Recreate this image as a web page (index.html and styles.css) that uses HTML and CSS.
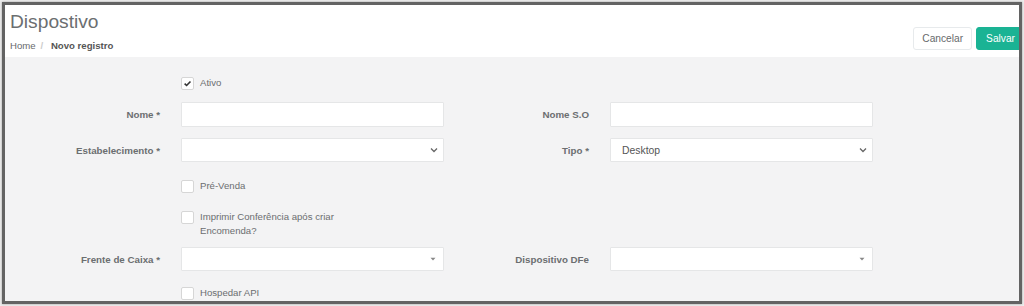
FILE: index.html
```html
<!DOCTYPE html>
<html lang="pt-BR">
<head>
  <meta charset="UTF-8">
  <title>Dispostivo</title>
  <link rel="stylesheet" href="styles.css">
</head>
<body>

<div class="frame">

  <!-- cabeçalho -->
  <header class="page-heading">
    <div class="heading-text">
      <h2>Dispostivo</h2>
      <ol class="breadcrumb">
        <li>Home</li>
        <li class="active">Novo registro</li>
      </ol>
    </div>
    <div class="actions">
      <button class="btn btn-white">Cancelar</button>
      <button class="btn btn-primary">Salvar</button>
    </div>
  </header>

  <!-- formulário -->
  <form class="form">
    <div class="row r-ativo">
      <div class="field">
        <label class="check">
          <span class="box"><svg width="9" height="9" viewBox="0 0 10 10"><path d="M1.8 5.2 L4 7.2 L8.3 2.8" fill="none" stroke="#333" stroke-width="1.8"/></svg></span>
          <span>Ativo</span>
        </label>
      </div>
    </div>

    <div class="row r-nome">
      <div class="field">
        <label class="lbl">Nome *</label>
        <input class="control" type="text">
      </div>
      <div class="field">
        <label class="lbl">Nome S.O</label>
        <input class="control" type="text">
      </div>
    </div>

    <div class="row r-estab">
      <div class="field">
        <label class="lbl">Estabelecimento *</label>
        <div class="control select">
          <span></span>
          <svg width="8" height="6" viewBox="0 0 8 6"><path d="M1 1.5 L4 4.5 L7 1.5" fill="none" stroke="#666" stroke-width="1.3"/></svg>
        </div>
      </div>
      <div class="field">
        <label class="lbl">Tipo *</label>
        <div class="control select">
          <span>Desktop</span>
          <svg width="8" height="6" viewBox="0 0 8 6"><path d="M1 1.5 L4 4.5 L7 1.5" fill="none" stroke="#666" stroke-width="1.3"/></svg>
        </div>
      </div>
    </div>

    <div class="row r-prevenda">
      <div class="field">
        <label class="check"><span class="box"></span><span>Pré-Venda</span></label>
      </div>
    </div>

    <div class="row r-imprimir">
      <div class="field">
        <label class="check"><span class="box"></span><span class="wrap">Imprimir Conferência após criar Encomenda?</span></label>
      </div>
    </div>

    <div class="row r-frente">
      <div class="field">
        <label class="lbl">Frente de Caixa *</label>
        <div class="control select s2">
          <span></span>
          <svg width="6" height="4" viewBox="0 0 6 4"><path d="M0.5 0.8 L5.5 0.8 L3 3.5 Z" fill="#888"/></svg>
        </div>
      </div>
      <div class="field">
        <label class="lbl">Dispositivo DFe</label>
        <div class="control select s2">
          <span></span>
          <svg width="6" height="4" viewBox="0 0 6 4"><path d="M0.5 0.8 L5.5 0.8 L3 3.5 Z" fill="#888"/></svg>
        </div>
      </div>
    </div>

    <div class="row r-hospedar">
      <div class="field">
        <label class="check"><span class="box"></span><span>Hospedar API</span></label>
      </div>
    </div>
  </form>

</div>

</body>
</html>
```

FILE: styles.css
```css
body { margin: 0; background: #ececec; font-family: "Liberation Sans", Arial, sans-serif; color: #676a6c; }

/* moldura do print */
.frame {
  margin: 2px;
  width: 1014px;
  height: 296px;
  border: 3px solid #636363;
  box-shadow: 0 0 2px rgba(0, 0, 0, 0.35);
  background: #f3f3f4;
  overflow: hidden;
}

/* cabeçalho */
.page-heading {
  display: flex;
  justify-content: space-between;
  height: 52px;
  box-sizing: border-box;
  padding: 6px 0 0 5px;
  background: #fff;
}
.page-heading h2 { margin: 0; font-size: 19.2px; line-height: 22px; font-weight: 400; color: #6b6e70; }
.breadcrumb { list-style: none; margin: 6px 0 0; padding: 0; display: flex; font-size: 9.6px; line-height: 14px; }
.breadcrumb li + li::before { content: "/\00a0"; padding: 0 5px; color: #ccc; }
.breadcrumb .active { font-weight: bold; color: #555; }

.actions { display: flex; gap: 4px; margin-top: 16px; margin-right: -6px; align-items: flex-start; }
.btn {
  height: 23px;
  padding: 0 8px;
  font-family: inherit;
  font-size: 10.2px;
  border-radius: 3px;
  border: 1px solid #e7eaec;
}
.btn-white { background: #fff; color: #676a6c; }
.btn-primary { background: #1ab394; border-color: #1ab394; color: #fff; padding: 0 9px; }

/* formulário */
.form { padding-top: 19px; }
.row { display: flex; padding-left: 10px; }
.field {
  display: grid;
  grid-template-columns: 145px 263px;
  column-gap: 21px;
  align-items: center;
  width: 429px;
}
.lbl { text-align: right; font-size: 9.75px; font-weight: bold; color: #6b6e70; }

.control {
  box-sizing: border-box;
  height: 25px;
  margin: 0;
  border: 1px solid #e5e6e7;
  background: #fff;
  border-radius: 1px;
}
.select {
  height: 24px;
  display: flex;
  justify-content: space-between;
  align-items: center;
  padding: 0 5px 0 11px;
  font-size: 10.4px;
  color: #555;
}
.select.s2 { padding-right: 7px; }

.check {
  grid-column: 2;
  display: flex;
  align-items: flex-start;
  gap: 6px;
  font-size: 9.6px;
  line-height: 14px;
  color: #6b6e70;
}
.box {
  box-sizing: border-box;
  width: 13px;
  height: 13px;
  margin-top: 1px;
  border: 1px solid #d6d6d6;
  border-radius: 2px;
  background: #fff;
  display: flex;
  align-items: center;
  justify-content: center;
}
.wrap { width: 150px; }

/* espaçamentos entre linhas */
.r-ativo { margin-bottom: 12px; }
.r-nome { margin-bottom: 11px; }
.r-estab { margin-bottom: 17px; }
.r-prevenda { margin-bottom: 17px; }
.r-imprimir { margin-bottom: 9px; }
.r-frente { margin-bottom: 15px; }
```
